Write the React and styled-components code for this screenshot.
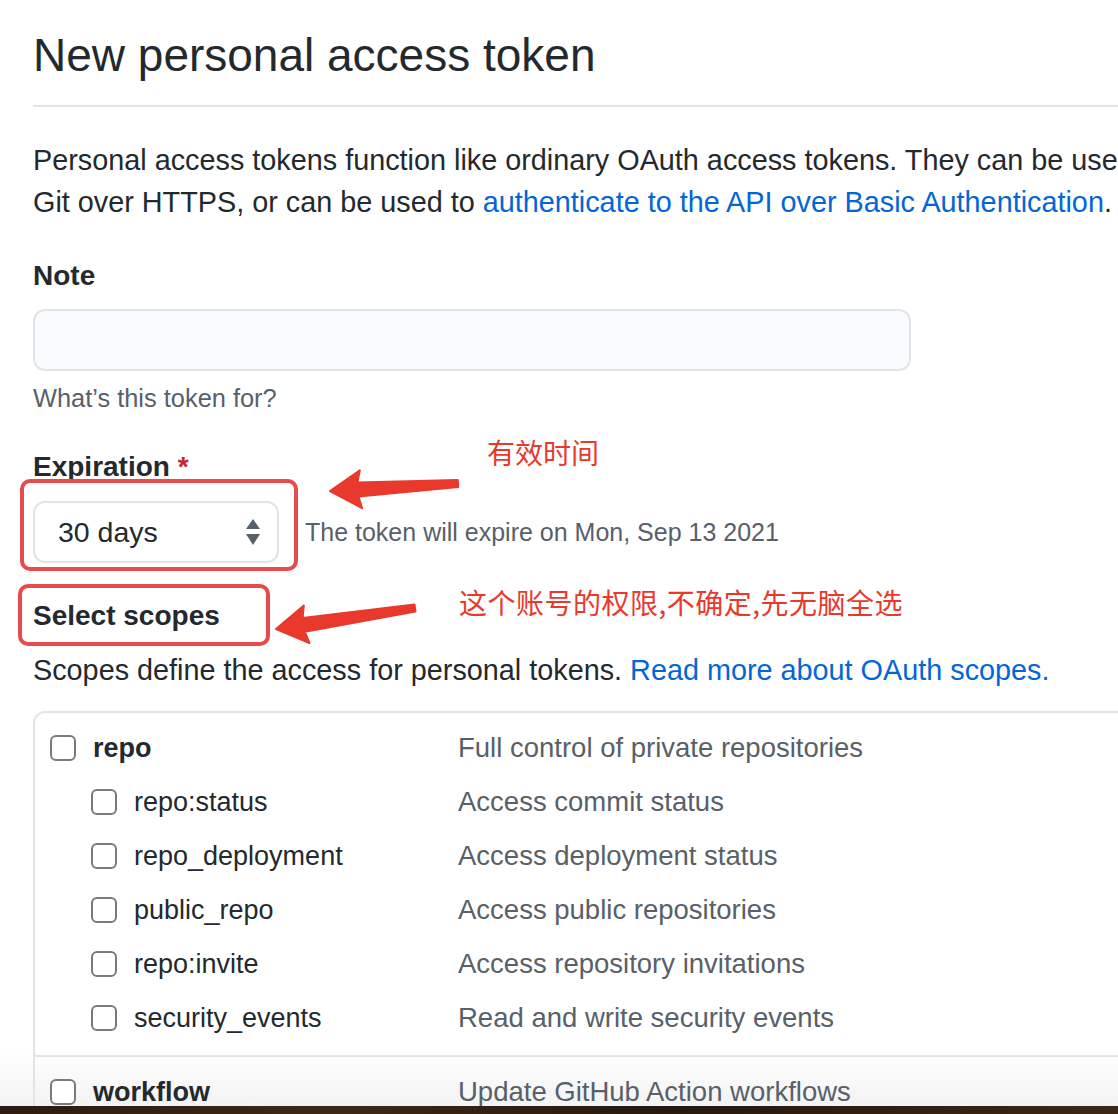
import React from 'react';
import styled, { createGlobalStyle } from 'styled-components';

const GlobalStyle = createGlobalStyle`
  html, body {
    margin: 0;
    padding: 0;
    background: #ffffff;
    overflow: hidden;
  }
  body {
    font-family: "Liberation Sans", Arial, sans-serif;
    color: #24292e;
  }
`;

const Screen = styled.div`
  width: 1118px;
  height: 1114px;
  display: flex;
  flex-direction: column;
  overflow: hidden;
`;

const Window = styled.div`
  position: relative;
  height: 1106px;
  overflow: hidden;
  background: linear-gradient(to bottom, #ffffff 0, #ffffff 1050px, #f3f3f3 1106px);
`;

const Desktop = styled.div`
  height: 8px;
  background: linear-gradient(to right, #2a1c12, #3b2818 30%, #24180f 60%, #3a2717);
`;

const Content = styled.div`
  width: 1500px;
  padding-left: 33px;
`;

const Subhead = styled.div`
  padding-top: 26px;
  padding-bottom: 21px;
  border-bottom: 2px solid #e1e4e8;
`;

const Heading = styled.h2`
  margin: 0;
  font-size: 46px;
  line-height: 58px;
  font-weight: 400;
  color: #24292e;
`;

const Text = styled.p`
  margin: ${p => p.$top || 0}px 0 0;
  font-size: 28.8px;
  line-height: 42px;
  white-space: nowrap;
  color: #24292e;
`;

const Link = styled.a`
  color: #0366d6;
  text-decoration: none;
`;

const Label = styled.div`
  margin-top: ${p => p.$top}px;
  font-size: 28px;
  line-height: 42px;
  font-weight: 700;
  color: #24292e;
`;

const Required = styled.span`
  color: #cb2431;
`;

const Input = styled.div`
  margin-top: 12px;
  width: 878px;
  height: 62px;
  box-sizing: border-box;
  border: 2px solid #e1e4e8;
  border-radius: 12px;
  background: #fafbfc;
`;

const Note = styled.div`
  margin-top: ${p => p.$top || 0}px;
  font-size: ${p => p.$size || 25.4}px;
  line-height: 36px;
  color: #586069;
`;

const SelectRow = styled.div`
  margin-top: 13px;
  display: flex;
  align-items: center;
  gap: 26px;
`;

const Select = styled.div`
  width: 246px;
  height: 62px;
  box-sizing: border-box;
  border: 2px solid #e1e4e8;
  border-radius: 12px;
  padding: 0 16px 0 23px;
  display: flex;
  align-items: center;
  justify-content: space-between;
  font-size: 28.5px;
  color: #24292e;
`;

const ScopeTable = styled.div`
  margin-top: 20px;
  border: 2px solid #e1e4e8;
  border-radius: 12px;
`;

const Group = styled.div`
  padding: 8px 0 10px;
  & + & {
    border-top: 2px solid #e1e4e8;
  }
`;

const Row = styled.div`
  height: 54px;
  display: grid;
  grid-template-columns: 408px 1fr;
  align-items: center;
  padding-left: 15px;
`;

const ScopeName = styled.div`
  display: flex;
  align-items: center;
  gap: 17px;
  padding-left: ${p => (p.$nested ? 41 : 0)}px;
  font-size: 27px;
  font-weight: ${p => (p.$nested ? 400 : 700)};
  color: #24292e;
`;

const Checkbox = styled.span`
  width: 26px;
  height: 26px;
  box-sizing: border-box;
  border: 2px solid #767b80;
  border-radius: 6px;
  background: #fff;
  flex-shrink: 0;
`;

const ScopeDesc = styled.div`
  font-size: 27.5px;
  color: #586069;
`;

const MarkBox = styled.div`
  position: absolute;
  box-sizing: border-box;
  border: 4px solid #e84b4e;
  border-radius: 10px;
`;

const Annotation = styled.div`
  position: absolute;
  font-family: "Noto Sans CJK SC", "Liberation Sans", sans-serif;
  font-size: 28px;
  line-height: 28px;
  letter-spacing: ${p => p.$spacing || 0}px;
  color: #e8392c;
  white-space: nowrap;
`;

const Overlay = styled.svg`
  position: absolute;
  left: 0;
  top: 0;
  pointer-events: none;
`;

const arrowPoints = (tail, tip) => {
  const dx = tip[0] - tail[0];
  const dy = tip[1] - tail[1];
  const len = Math.hypot(dx, dy);
  const ux = dx / len;
  const uy = dy / len;
  const nx = -uy;
  const ny = ux;
  const at = (d, w) => [tip[0] - ux * d + nx * w, tip[1] - uy * d + ny * w];
  const pts = [
    tip,
    at(31, 19),
    at(28, 7),
    [tail[0] + nx * 3.5, tail[1] + ny * 3.5],
    [tail[0] - nx * 3.5, tail[1] - ny * 3.5],
    at(28, -7),
    at(31, -19),
  ];
  return pts.map(p => p.map(v => v.toFixed(1)).join(',')).join(' ');
};

const UpDown = () => (
  <svg width="16" height="28" viewBox="0 0 16 28">
    <path d="M8 1 L15 11 L1 11 Z" fill="#586069" />
    <path d="M1 16 L15 16 L8 27 Z" fill="#586069" />
  </svg>
);

const repoScopes = [
  ['repo:status', 'Access commit status'],
  ['repo_deployment', 'Access deployment status'],
  ['public_repo', 'Access public repositories'],
  ['repo:invite', 'Access repository invitations'],
  ['security_events', 'Read and write security events'],
];

const App = () => {
  return (
    <>
      <GlobalStyle />
      <Screen>
        <Window>
          <Content>
            <Subhead>
              <Heading>New personal access token</Heading>
            </Subhead>
            <Text $top={32}>
              Personal access tokens function like ordinary OAuth access tokens. They can be used instead of a password for
              <br />
              Git over HTTPS, or can be used to <Link>authenticate to the API over Basic Authentication</Link>.
            </Text>

            <Label $top={32}>Note</Label>
            <Input />
            <Note $top={9}>What’s this token for?</Note>

            <Label $top={30}>
              Expiration <Required>*</Required>
            </Label>
            <SelectRow>
              <Select>
                <span>30 days</span>
                <UpDown />
              </Select>
              <Note $size={25}>The token will expire on Mon, Sep 13 2021</Note>
            </SelectRow>

            <Label $top={32}>Select scopes</Label>
            <Text $top={12}>
              Scopes define the access for personal tokens. <Link>Read more about OAuth scopes.</Link>
            </Text>

            <ScopeTable>
              <Group>
                <Row>
                  <ScopeName>
                    <Checkbox />
                    repo
                  </ScopeName>
                  <ScopeDesc>Full control of private repositories</ScopeDesc>
                </Row>
                {repoScopes.map(([name, desc]) => (
                  <Row key={name}>
                    <ScopeName $nested>
                      <Checkbox />
                      {name}
                    </ScopeName>
                    <ScopeDesc>{desc}</ScopeDesc>
                  </Row>
                ))}
              </Group>
              <Group>
                <Row>
                  <ScopeName>
                    <Checkbox />
                    workflow
                  </ScopeName>
                  <ScopeDesc>Update GitHub Action workflows</ScopeDesc>
                </Row>
              </Group>
            </ScopeTable>
          </Content>

          {/* annotations drawn over the page */}
          <MarkBox style={{ left: 20, top: 479, width: 278, height: 92 }} />
          <MarkBox style={{ left: 18, top: 584, width: 252, height: 62 }} />
          <Annotation style={{ left: 487, top: 438 }}>有效时间</Annotation>
          <Annotation $spacing={0.5} style={{ left: 459, top: 588 }}>这个账号的权限,不确定,先无脑全选</Annotation>
          <Overlay width="1118" height="1106">
            <polygon
              points={arrowPoints([458, 483.5], [330, 491])}
              fill="#e8392c"
              stroke="#e8392c"
              strokeWidth="2"
              strokeLinejoin="round"
            />
            <polygon
              points={arrowPoints([415, 608], [276, 629])}
              fill="#e8392c"
              stroke="#e8392c"
              strokeWidth="2"
              strokeLinejoin="round"
            />
          </Overlay>
        </Window>
        <Desktop />
      </Screen>
    </>
  );
};

export default App;
